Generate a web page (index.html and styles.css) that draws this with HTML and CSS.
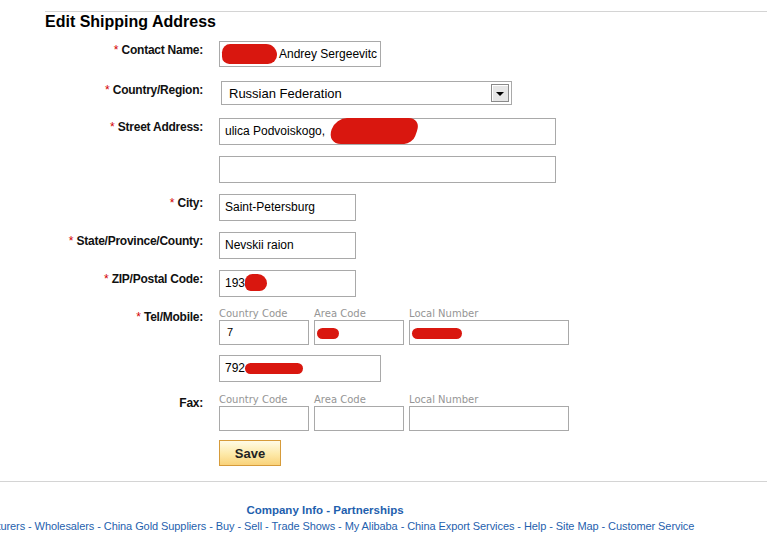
FILE: index.html
```html
<!DOCTYPE html>
<html lang="en">
<head>
    <meta charset="UTF-8">
    <title>Edit Shipping Address</title>
    <link rel="stylesheet" href="styles.css">
</head>
<body>
    <div class="page">
        <h2>Edit Shipping Address</h2>

        <div class="form">
            <div class="row contact">
                <label class="label"><span class="req">*</span> Contact Name:</label>
                <div class="input w-mid"><span class="blot blot-name"></span>Andrey Sergeevitc</div>
            </div>

            <div class="row country">
                <label class="label"><span class="req">*</span> Country/Region:</label>
                <div class="select">
                    <span>Russian Federation</span>
                    <span class="select-btn"><span class="arrow"></span></span>
                </div>
            </div>

            <div class="row">
                <label class="label"><span class="req">*</span> Street Address:</label>
                <div class="input w-wide">ulica Podvoiskogo, <span class="blot blot-street"></span></div>
            </div>

            <div class="row">
                <label class="label"></label>
                <div class="input w-wide"></div>
            </div>

            <div class="row">
                <label class="label"><span class="req">*</span> City:</label>
                <div class="input w-short">Saint-Petersburg</div>
            </div>

            <div class="row">
                <label class="label"><span class="req">*</span> State/Province/County:</label>
                <div class="input w-short">Nevskii raion</div>
            </div>

            <div class="row zip">
                <label class="label"><span class="req">*</span> ZIP/Postal Code:</label>
                <div class="input w-short">193<span class="blot blot-zip"></span></div>
            </div>

            <div class="row phone-row tel">
                <label class="label"><span class="req">*</span> Tel/Mobile:</label>
                <div class="phone">
                    <div class="cell cc">
                        <span class="hint">Country Code</span>
                        <div class="input small">7</div>
                    </div>
                    <div class="cell area">
                        <span class="hint">Area Code</span>
                        <div class="input small"><span class="blot blot-area"></span></div>
                    </div>
                    <div class="cell local">
                        <span class="hint">Local Number</span>
                        <div class="input small"><span class="blot blot-local"></span></div>
                    </div>
                </div>
            </div>

            <div class="row mobile">
                <label class="label"></label>
                <div class="input w-mid">792<span class="blot blot-mobile"></span></div>
            </div>

            <div class="row phone-row fax">
                <label class="label">Fax:</label>
                <div class="phone">
                    <div class="cell cc">
                        <span class="hint">Country Code</span>
                        <div class="input small"></div>
                    </div>
                    <div class="cell area">
                        <span class="hint">Area Code</span>
                        <div class="input small"></div>
                    </div>
                    <div class="cell local">
                        <span class="hint">Local Number</span>
                        <div class="input small"></div>
                    </div>
                </div>
            </div>

            <div class="row">
                <label class="label"></label>
                <button class="save-btn">Save</button>
            </div>
        </div>
    </div>

    <footer>
        <div class="footer-inner">
            <div class="footer-line strong"><a href="#">Company Info</a>&nbsp;-&nbsp;<a href="#">Partnerships</a></div>
            <div class="footer-line">
                <a href="#">Manufacturers</a>&nbsp;-&nbsp;<a href="#">Wholesalers</a>&nbsp;-&nbsp;<a href="#">China Gold Suppliers</a>&nbsp;-&nbsp;<a href="#">Buy</a>&nbsp;-&nbsp;<a href="#">Sell</a>&nbsp;-&nbsp;<a href="#">Trade Shows</a>&nbsp;-&nbsp;<a href="#">My Alibaba</a>&nbsp;-&nbsp;<a href="#">China Export Services</a>&nbsp;-&nbsp;<a href="#">Help</a>&nbsp;-&nbsp;<a href="#">Site Map</a>&nbsp;-&nbsp;<a href="#">Customer Service</a>
            </div>
        </div>
    </footer>
</body>
</html>
```

FILE: styles.css
```css
* {
    margin: 0;
    padding: 0;
    box-sizing: border-box;
}

body {
    font-family: "Liberation Sans", Arial, sans-serif;
    font-size: 12px;
    color: #000;
    background: #fff;
    overflow: hidden;
}

.page {
    margin: 11px 0 0 45px;
    border-top: 1px solid #d4d4d4;
}

.page h2 {
    font-size: 16px;
    line-height: 20px;
    font-weight: bold;
    margin-bottom: 9px;
}

.row {
    display: flex;
    gap: 16px;
    margin-bottom: 11px;
}

.row.contact {
    margin-bottom: 14px;
}

.row.country {
    margin-bottom: 13px;
}

.row.tel {
    margin-bottom: 10px;
}

.row.mobile {
    margin-bottom: 12px;
}

.row.fax {
    margin-bottom: 9px;
}

.label {
    width: 158px;
    flex-shrink: 0;
    text-align: right;
    font-weight: bold;
    line-height: 14px;
    padding-top: 2px;
    letter-spacing: -0.25px;
    color: #111;
}

.phone-row .label {
    padding-top: 2px;
}

.req {
    color: #d40000;
    font-weight: normal;
    letter-spacing: 0;
}

.input {
    height: 27px;
    border: 1px solid #a9a9a9;
    background: #fff;
    padding-left: 5px;
    line-height: 25px;
    white-space: nowrap;
    overflow: visible;
}

.w-mid {
    width: 162px;
    height: 26px;
    line-height: 24px;
    overflow: hidden;
    padding-left: 2px;
}

.row.mobile .w-mid {
    height: 27px;
    line-height: 25px;
    padding-left: 5px;
    overflow: visible;
}

.w-wide {
    width: 337px;
}

.w-short {
    width: 137px;
}

.select {
    width: 291px;
    height: 24px;
    margin-left: 2px;
    border: 1px solid #a9a9a9;
    display: flex;
    align-items: center;
    justify-content: space-between;
    padding: 0 2px 0 7px;
    font-size: 13px;
}

.select-btn {
    width: 18px;
    height: 18px;
    border: 1px solid #8a8a8a;
    background: #e6e6e6;
    box-shadow: inset 1px 1px 0 #fff;
    display: flex;
    align-items: center;
    justify-content: center;
}

.arrow {
    width: 0;
    height: 0;
    border-left: 4px solid transparent;
    border-right: 4px solid transparent;
    border-top: 4px solid #000;
    margin-top: 1px;
}

.phone {
    display: flex;
    gap: 5px;
}

.cell {
    display: flex;
    flex-direction: column;
}

.hint {
    height: 12px;
    font-family: "DejaVu Sans", Verdana, sans-serif;
    font-size: 10px;
    line-height: 12px;
    color: #959595;
}

.input.small {
    height: 25px;
    line-height: 23px;
    font-size: 11px;
    padding-left: 7px;
}

.cc {
    width: 90px;
}

.area {
    width: 90px;
}

.local {
    width: 160px;
}

/* red marker scribbles over private data */
.blot {
    display: inline-block;
    background: #d9170f;
    vertical-align: middle;
}

.blot-name {
    width: 55px;
    height: 20px;
    border-radius: 9px 12px 10px 8px;
    margin-right: 2px;
    margin-top: -2px;
}

.blot-street {
    width: 86px;
    height: 26px;
    border-radius: 14px 16px 10px 18px;
    margin: -8px 0 -6px 3px;
    transform: skewX(-20deg);
}

.blot-zip {
    width: 22px;
    height: 17px;
    border-radius: 8px 10px 8px 6px;
    margin-top: -2px;
}

.blot-area {
    width: 22px;
    height: 11px;
    border-radius: 6px;
    margin-left: -5px;
}

.blot-local {
    width: 50px;
    height: 11px;
    border-radius: 6px;
    margin-left: -5px;
}

.blot-mobile {
    width: 58px;
    height: 11px;
    border-radius: 6px;
}

.save-btn {
    width: 62px;
    height: 26px;
    border: 1px solid #d69b3a;
    background: linear-gradient(#fffbe6, #fde9a8 55%, #f9d27a);
    font-family: "Liberation Sans", Arial, sans-serif;
    font-size: 13px;
    font-weight: bold;
    color: #222;
    cursor: pointer;
}

footer {
    margin-top: 15px;
    border-top: 1px solid #d4d4d4;
    padding-top: 20px;
}

.footer-inner {
    width: 650px;
}

.footer-line {
    display: flex;
    justify-content: center;
    white-space: nowrap;
    font-size: 11px;
    line-height: 16px;
    letter-spacing: -0.08px;
    color: #1f5fae;
}

.footer-line.strong {
    font-size: 11.5px;
    font-weight: bold;
    letter-spacing: 0;
}

.footer-line a {
    color: #1f5fae;
    text-decoration: none;
}
```
